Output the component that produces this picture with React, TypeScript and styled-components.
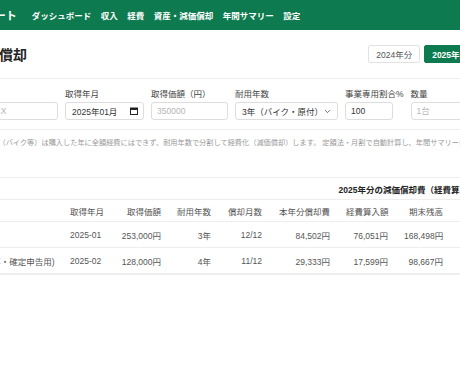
import React from "react";
import styled, { createGlobalStyle } from "styled-components";
import { ChevronDown } from "lucide-react";

const GREEN = "#0e7a4f";

const GlobalStyle = createGlobalStyle`
  html, body {
    margin: 0;
    padding: 0;
    background: #fff;
  }
  body {
    font-family: "Liberation Sans", "Noto Sans CJK JP", sans-serif;
    color: #333;
  }
`;

const Viewport = styled.div`
  width: 100%;
  overflow: hidden;
`;

// the page is wider than the window; the shot shows it scrolled sideways
const Page = styled.div`
  width: 635px;
  margin-left: -87px;
`;

const Header = styled.header`
  height: 30px;
  background: ${GREEN};
  display: flex;
  align-items: center;
  padding: 0 16px;
`;

const Logo = styled.div`
  color: #fff;
  font-size: 11px;
  font-weight: 700;
  margin-right: 15px;
  white-space: nowrap;
`;

const Nav = styled.nav`
  display: flex;
  gap: 9.5px;

  a {
    color: #fff;
    font-size: 8.5px;
    font-weight: 700;
    text-decoration: none;
    white-space: nowrap;
  }
`;

const Main = styled.main`
  padding: 0 16px;
`;

const TitleRow = styled.div`
  height: 20px;
  margin: 14px 0;
  display: flex;
  align-items: center;
  justify-content: space-between;

  h1 {
    margin: 0;
    font-size: 14px;
    font-weight: 700;
    color: #222;
    white-space: nowrap;
  }
`;

const YearTabs = styled.div`
  display: flex;
  gap: 4px;
`;

const YearButton = styled.button<{ $active?: boolean }>`
  height: 18px;
  padding: 0 7px;
  font-family: inherit;
  font-size: 8.5px;
  font-weight: ${(p) => (p.$active ? 700 : 400)};
  color: ${(p) => (p.$active ? "#fff" : "#555")};
  background: ${(p) => (p.$active ? GREEN : "#fff")};
  border: 1px solid ${(p) => (p.$active ? GREEN : "#e2e2e2")};
  border-radius: 2px;
  white-space: nowrap;
`;

const FormCard = styled.section`
  border: 1px solid #eee;
  border-radius: 3px;
  padding: 9px 8px;
  display: flex;
  align-items: flex-end;
  gap: 7px;
`;

const Field = styled.label`
  display: flex;
  flex-direction: column;
  gap: 2px;

  span {
    font-size: 8.5px;
    line-height: 12px;
    color: #444;
    white-space: nowrap;
  }
`;

const TextInput = styled.input<{ $w: number }>`
  width: ${(p) => p.$w}px;
  height: 18px;
  box-sizing: border-box;
  padding: 0 5px;
  border: 1px solid #ddd;
  border-radius: 3px;
  font-family: inherit;
  font-size: 8.5px;
  color: #333;
  outline: none;

  &::placeholder {
    color: #b5b5b5;
  }
`;

const FakeControl = styled.div<{ $w: number }>`
  width: ${(p) => p.$w}px;
  height: 18px;
  box-sizing: border-box;
  padding: 0 5px 0 6px;
  border: 1px solid #ddd;
  border-radius: 3px;
  display: flex;
  align-items: center;
  justify-content: space-between;
  font-size: 8.5px;
  color: #333;
  white-space: nowrap;
  background: #fff;
`;

const AddButton = styled.button`
  height: 18px;
  padding: 0 10px;
  background: ${GREEN};
  color: #fff;
  border: none;
  border-radius: 3px;
  font-family: inherit;
  font-size: 8.5px;
  font-weight: 700;
`;

const Note = styled.p`
  margin: 7px 0 0;
  padding-left: 2px;
  font-size: 7.2px;
  line-height: 11px;
  color: #999;
  white-space: nowrap;
`;

const TableCard = styled.section`
  margin-top: 29px;
  border: 1px solid #eee;
  border-radius: 3px;
`;

const CaptionRow = styled.div`
  height: 21px;
  padding: 0 12px 0 8px;
  display: flex;
  align-items: center;
  justify-content: space-between;
  border-bottom: 1px solid #eee;
  font-size: 8.5px;
  font-weight: 700;
  color: #222;
  white-space: nowrap;
`;

const Table = styled.table`
  width: 100%;
  table-layout: fixed;
  border-collapse: collapse;
  font-size: 8.5px;
  color: #555;

  th,
  td {
    padding: 0 8px;
    text-align: right;
    white-space: nowrap;
    border-bottom: 1px solid #eee;
  }

  th {
    height: 21px;
    font-weight: 400;
    color: #555;
  }

  td {
    height: 25px;
  }

  th:first-child,
  td:first-child,
  th:nth-child(2),
  td:nth-child(2) {
    text-align: left;
  }
`;

const DeleteButton = styled.button`
  font-family: inherit;
  font-size: 8px;
  color: #c44;
  background: #fff;
  border: 1px solid #eccaca;
  border-radius: 2px;
  padding: 1px 5px;
`;

function CalendarIcon() {
  return (
    <svg width="8" height="8" viewBox="0 0 8 8" aria-hidden>
      <rect x="0.5" y="1" width="7" height="6.5" fill="none" stroke="#222" strokeWidth="1" />
      <rect x="0.5" y="1" width="7" height="2" fill="#222" />
    </svg>
  );
}

const cols = [132, 51, 56, 50, 51, 68, 58, 55];

const assets = [
  {
    name: "ホンダ PCX",
    date: "2025-01",
    price: "253,000円",
    life: "3年",
    months: "12/12",
    dep: "84,502円",
    expense: "76,051円",
    rest: "168,498円",
  },
  {
    name: "ノートPC（仕事・確定申告用)",
    date: "2025-02",
    price: "128,000円",
    life: "4年",
    months: "11/12",
    dep: "29,333円",
    expense: "17,599円",
    rest: "98,667円",
  },
];

export default function App() {
  return (
    <Viewport>
      <GlobalStyle />
      <Page>
        <Header>
          <Logo>バイク経費ノート</Logo>
          <Nav>
            <a href="#">ダッシュボード</a>
            <a href="#">収入</a>
            <a href="#">経費</a>
            <a href="#">資産・減価償却</a>
            <a href="#">年間サマリー</a>
            <a href="#">設定</a>
          </Nav>
        </Header>
        <Main>
          <TitleRow>
            <h1>資産・減価償却</h1>
            <YearTabs>
              <YearButton>2024年分</YearButton>
              <YearButton $active>2025年分</YearButton>
              <YearButton>2026年分</YearButton>
            </YearTabs>
          </TitleRow>

          <FormCard>
            <Field>
              <span>資産名</span>
              <TextInput $w={120} placeholder="例：ホンダ PCX" />
            </Field>
            <Field>
              <span>取得年月</span>
              <FakeControl $w={79}>
                2025年01月
                <CalendarIcon />
              </FakeControl>
            </Field>
            <Field>
              <span>取得価額（円）</span>
              <TextInput $w={77} placeholder="350000" />
            </Field>
            <Field>
              <span>耐用年数</span>
              <FakeControl $w={103}>
                3年（バイク・原付）
                <ChevronDown size={9} strokeWidth={2} color="#444" />
              </FakeControl>
            </Field>
            <Field>
              <span>事業専用割合%</span>
              <TextInput $w={48} defaultValue="100" />
            </Field>
            <Field>
              <span>数量</span>
              <TextInput $w={60} placeholder="1台" />
            </Field>
            <AddButton>追加</AddButton>
          </FormCard>

          <Note>
            ※ 10万円以上の資産（バイク等）は購入した年に全額経費にはできず、耐用年数で分割して経費化（減価償却）します。
            定額法・月割で自動計算し、年間サマリーに反映されます。
          </Note>

          <TableCard>
            <CaptionRow>
              <span>登録資産</span>
              <span>2025年分の減価償却費（経費算入額）の合計：</span>
            </CaptionRow>
            <Table>
              <colgroup>
                {cols.map((w, i) => (
                  <col key={i} style={{ width: w }} />
                ))}
                <col />
              </colgroup>
              <thead>
                <tr>
                  <th>資産名</th>
                  <th>取得年月</th>
                  <th>取得価額</th>
                  <th>耐用年数</th>
                  <th>償却月数</th>
                  <th>本年分償却費</th>
                  <th>経費算入額</th>
                  <th>期末残高</th>
                  <th>操作</th>
                </tr>
              </thead>
              <tbody>
                {assets.map((a) => (
                  <tr key={a.name}>
                    <td>{a.name}</td>
                    <td>{a.date}</td>
                    <td>{a.price}</td>
                    <td>{a.life}</td>
                    <td>{a.months}</td>
                    <td>{a.dep}</td>
                    <td>{a.expense}</td>
                    <td>{a.rest}</td>
                    <td>
                      <DeleteButton>削除</DeleteButton>
                    </td>
                  </tr>
                ))}
              </tbody>
            </Table>
          </TableCard>
        </Main>
      </Page>
    </Viewport>
  );
}
